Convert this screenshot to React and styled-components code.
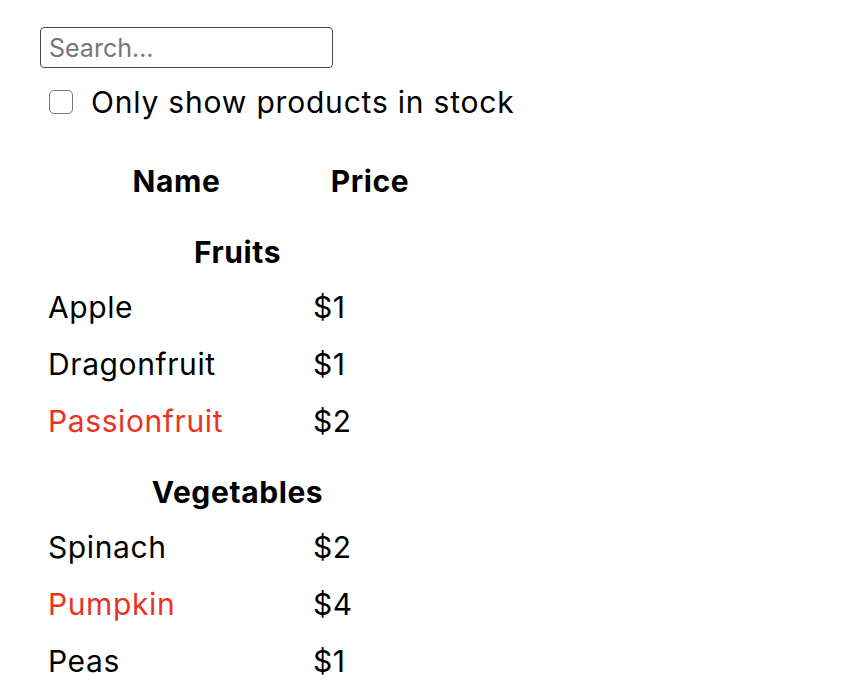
import styled, { createGlobalStyle } from "styled-components";

const GlobalStyle = createGlobalStyle`
  body {
    margin: 0;
    background: #ffffff;
    font-family: Inter, "Liberation Sans", Arial, sans-serif;
    color: #000000;
  }
`;

const Page = styled.div`
  padding: 27px 0 0 40px;
`;

const SearchInput = styled.input`
  box-sizing: border-box;
  width: 293px;
  height: 41px;
  padding: 0 8px;
  border: 1.5px solid #4a4a4a;
  border-radius: 4px;
  font-family: Inter, "Liberation Sans", Arial, sans-serif;
  font-size: 25px;
  color: #000000;
  outline: none;

  &::placeholder {
    color: #767676;
  }
`;

const CheckRow = styled.label`
  display: flex;
  align-items: center;
  gap: 18px;
  height: 40px;
  margin-top: 14px;
  padding-left: 9px;
  font-size: 30px;
  letter-spacing: 0.8px;
`;

const Check = styled.input`
  appearance: none;
  box-sizing: border-box;
  width: 24px;
  height: 24px;
  margin: 0;
  border: 1.5px solid #7a7a7a;
  border-radius: 5px;
  background: #ffffff;
`;

const Table = styled.table`
  margin: 30px 0 0 4px;
  border-collapse: collapse;
  font-size: 30px;
  letter-spacing: 0.6px;
`;

const HeadCell = styled.th`
  height: 57px;
  width: ${(p) => p.$w}px;
  padding: 0;
  text-align: center;
  font-weight: 700;
`;

const CategoryCell = styled.th`
  height: 63px;
  padding: 0 0 6px;
  vertical-align: bottom;
  line-height: 40px;
  text-align: center;
  font-weight: 700;
`;

const Cell = styled.td`
  height: 57px;
  padding: 0 0 0 4px;
  color: ${(p) => (p.$out ? "#ea3323" : "#000000")};
`;

const PRODUCTS = [
  { category: "Fruits", price: "$1", stocked: true, name: "Apple" },
  { category: "Fruits", price: "$1", stocked: true, name: "Dragonfruit" },
  { category: "Fruits", price: "$2", stocked: false, name: "Passionfruit" },
  { category: "Vegetables", price: "$2", stocked: true, name: "Spinach" },
  { category: "Vegetables", price: "$4", stocked: false, name: "Pumpkin" },
  { category: "Vegetables", price: "$1", stocked: true, name: "Peas" },
];

function ProductTable({ products }) {
  const rows = [];
  let last = null;
  products.forEach((p) => {
    if (p.category !== last) {
      rows.push(
        <tr key={p.category}>
          <CategoryCell colSpan={2}>{p.category}</CategoryCell>
        </tr>
      );
      last = p.category;
    }
    rows.push(
      <tr key={p.name}>
        <Cell $out={!p.stocked}>{p.name}</Cell>
        <Cell>{p.price}</Cell>
      </tr>
    );
  });

  return (
    <Table>
      <thead>
        <tr>
          <HeadCell $w={265}>Name</HeadCell>
          <HeadCell $w={122}>Price</HeadCell>
        </tr>
      </thead>
      <tbody>{rows}</tbody>
    </Table>
  );
}

export default function App() {
  return (
    <Page>
      <GlobalStyle />
      <SearchInput type="text" placeholder="Search..." />
      <CheckRow>
        <Check type="checkbox" />
        Only show products in stock
      </CheckRow>
      <ProductTable products={PRODUCTS} />
    </Page>
  );
}
